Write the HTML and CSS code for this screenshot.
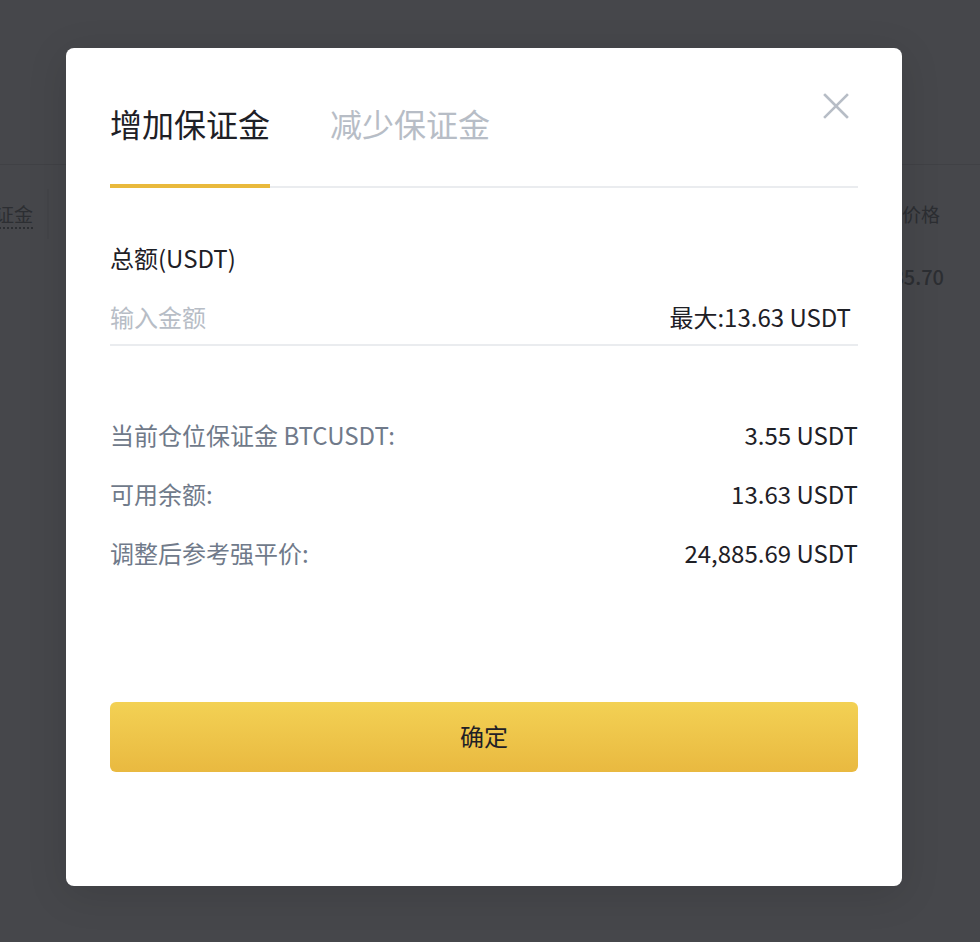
FILE: index.html
```html
<!DOCTYPE html>
<html>
<head>
  <title>调整保证金</title>
  <link rel="stylesheet" href="styles.css">
</head>
<body>

<!-- page behind the dialog -->
<div class="page">
  <div class="page-head"></div>
  <div class="table-head">
    <div class="th th-left"><span class="dotted">保证金</span></div>
    <div class="th th-right">标记价格</div>
  </div>
  <div class="table-row">
    <div class="td"></div>
    <div class="td td-right">26,885.70</div>
  </div>
</div>

<!-- margin dialog -->
<div class="modal">
  <button class="close" aria-label="关闭">
    <svg width="26" height="26" viewBox="0 0 26 26">
      <path d="M2 2 L24 24 M24 2 L2 24" stroke="#b7bdc6" stroke-width="2.6" stroke-linecap="square"/>
    </svg>
  </button>

  <div class="tabs">
    <div class="tab active">增加保证金</div>
    <div class="tab">减少保证金</div>
  </div>

  <div class="field-label">总额(USDT)</div>
  <div class="input-row">
    <input type="text" placeholder="输入金额">
    <span class="max">最大:13.63 USDT</span>
  </div>

  <div class="info">
    <div class="info-row">
      <span class="key">当前仓位保证金 BTCUSDT:</span>
      <span class="val">3.55 USDT</span>
    </div>
    <div class="info-row">
      <span class="key">可用余额:</span>
      <span class="val">13.63 USDT</span>
    </div>
    <div class="info-row">
      <span class="key">调整后参考强平价:</span>
      <span class="val">24,885.69 USDT</span>
    </div>
  </div>

  <button class="confirm">确定</button>
</div>

</body>
</html>
```

FILE: styles.css
```css
body {
  margin: 0;
  background: #46474b;
  font-family: "Noto Sans CJK SC", "Noto Sans", sans-serif;
  overflow: hidden;
  height: 942px;
}

/* Background page (dimmed) */
.page {
  color: #2c2e32;
}

.page-head {
  height: 164px;
  border-bottom: 1px solid #404145;
}

.table-head {
  display: flex;
  justify-content: space-between;
  margin: 24px 40px 0 -24px;
  height: 50px;
  align-items: center;
  font-size: 19px;
}

.th {
  padding: 0 14px 0 0;
  border-right: 2px solid #434448;
  line-height: 50px;
}

.th-right {
  border-right: none;
  border-left: 2px solid #434448;
  padding-left: 2px;
  padding-right: 0;
}

.dotted {
  border-bottom: 2px dotted #2c2e32;
}

.table-row {
  display: flex;
  justify-content: space-between;
  padding-right: 36px;
  margin-top: 23px;
  font-size: 20px;
  font-weight: 500;
}

/* Dialog */
.modal {
  position: absolute;
  left: 66px;
  top: 48px;
  width: 748px;
  padding: 44px 44px 114px;
  background: #fff;
  border-radius: 8px;
  box-shadow: 0 8px 40px rgba(0, 0, 0, 0.12);
}

.close {
  position: absolute;
  top: 45px;
  right: 53px;
  width: 26px;
  height: 26px;
  padding: 0;
  border: none;
  background: none;
  cursor: pointer;
}

.close svg {
  display: block;
}

.tabs {
  display: flex;
  gap: 60px;
  border-bottom: 2px solid #eaecef;
}

.tab {
  font-size: 32px;
  line-height: 62px;
  padding-bottom: 30px;
  border-bottom: 4px solid transparent;
  margin-bottom: -2px;
  color: #b7bdc6;
  cursor: pointer;
}

.tab.active {
  color: #1e2026;
  border-bottom-color: #e9b93c;
}

.field-label {
  margin-top: 54px;
  font-size: 24px;
  line-height: 32px;
  color: #1e2026;
}

.input-row {
  display: flex;
  align-items: center;
  margin-top: 18px;
  padding: 9px 7px 11px 0;
  border-bottom: 2px solid #eaecef;
}

.input-row input {
  flex: 1;
  border: none;
  outline: none;
  padding: 0;
  font-family: inherit;
  font-size: 24px;
  line-height: 32px;
  height: 32px;
  color: #1e2026;
}

.input-row input::placeholder {
  color: #b7bdc6;
}

.max {
  font-size: 24px;
  line-height: 32px;
  color: #1e2026;
}

.info {
  margin-top: 73px;
  display: flex;
  flex-direction: column;
  gap: 27px;
}

.info-row {
  display: flex;
  justify-content: space-between;
  font-size: 24px;
  line-height: 32px;
}

.key {
  color: #707a8a;
}

.val {
  color: #1e2026;
}

.confirm {
  display: block;
  width: 100%;
  height: 70px;
  margin-top: 133px;
  padding: 0 0 4px;
  border: none;
  border-radius: 6px;
  background: linear-gradient(180deg, #f3d154 0%, #e9b940 100%);
  font-family: inherit;
  font-size: 24px;
  color: #1e2026;
  cursor: pointer;
}
```
